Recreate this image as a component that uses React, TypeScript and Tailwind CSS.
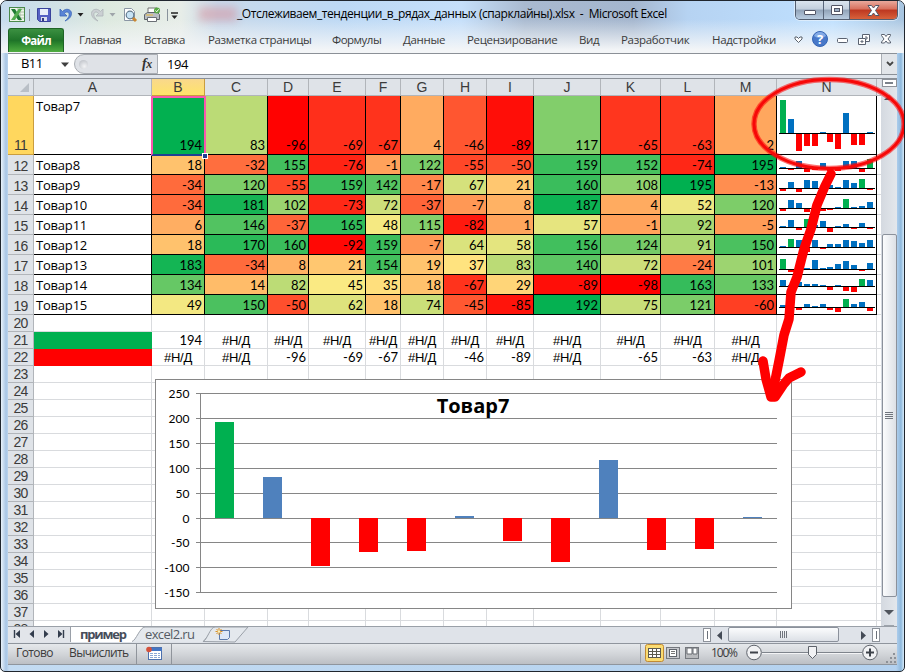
import React from 'react';

const COLS = [
  { n: 'A', w: 118 }, { n: 'B', w: 53 }, { n: 'C', w: 63 }, { n: 'D', w: 41 }, { n: 'E', w: 57 },
  { n: 'F', w: 35 }, { n: 'G', w: 43 }, { n: 'H', w: 43 }, { n: 'I', w: 47 }, { n: 'J', w: 67 },
  { n: 'K', w: 60 }, { n: 'L', w: 54 }, { n: 'M', w: 62 }, { n: 'N', w: 100 },
];

const DATA: number[][] = [
  [194, 83, -96, -69, -67, 4, -46, -89, 117, -65, -63, 2],
  [18, -32, 155, -76, -1, 122, -55, -50, 159, 152, -74, 195],
  [-34, 120, -55, 159, 142, -17, 67, 21, 160, 108, 195, -13],
  [-34, 181, 102, -73, 72, -37, -7, 8, 187, 4, 52, 120],
  [6, 146, -37, 165, 48, 115, -82, 1, 57, -1, 92, -5],
  [18, 170, 160, -92, 159, -7, 64, 58, 156, 124, 91, 150],
  [183, -34, 8, 21, 154, 19, 37, 83, 140, 72, -24, 101],
  [134, 14, 82, 45, 35, 18, -67, 29, -89, -98, 163, 133],
  [49, 150, -50, 62, 18, 74, -45, -85, 192, 75, 121, -60],
];

const NA = '#Н/Д';
const LINE21 = ['194', NA, NA, NA, NA, NA, NA, NA, NA, NA, NA, NA];
const LINE22 = [NA, NA, '-96', '-69', '-67', NA, '-46', '-89', NA, '-65', '-63', NA];

function heat(v: number) {
  const lo = [255, 0, 0], mid = [255, 235, 132], hi = [0, 176, 80];
  const a = v < 42 ? lo : mid;
  const b = v < 42 ? mid : hi;
  const t = v < 42 ? Math.max(0, (v + 97) / 139) : (v - 42) / 153;
  return `rgb(${a.map((c, i) => Math.round(c + (b[i] - c) * t)).join(',')})`;
}

function Spark({ values, tall }: { values: number[]; tall: boolean }) {
  const max = Math.max(...values);
  const min = Math.min(...values);
  const range = tall ? 50 : 12;
  const axis = Math.round(4 + (range * max) / (max - min));
  return (
    <svg width="99" height={tall ? 58 : 19} className="block" shapeRendering="crispEdges">
      {values.map((v, i) => {
        const h = Math.max(1, Math.round((Math.abs(v) * range) / (max - min)));
        return (
          <rect key={i} x={Math.round(3 + i * 7.9)} width="6" height={h}
            y={v < 0 ? axis + 1 : axis - h} fill={v === max ? '#00b050' : v < 0 ? '#ff0000' : '#0070c0'} />
        );
      })}
      <rect x="2" y={axis} width="96" height="1" fill="#000" />
    </svg>
  );
}

function RowHead({ n, active }: { n: number; active?: boolean }) {
  return (
    <div className={`flex w-[26px] shrink-0 items-end justify-center border-r border-b text-[14px] tracking-[-0.7px] ${active ? 'border-[#c99d3f] bg-[#ffd75e] leading-[18px]' : 'border-[#b1b5ba] bg-[#dfe3e8] leading-[16px]'} text-[#3b3b3b] font-['Liberation_Sans',sans-serif]`}>
      {n}
    </div>
  );
}

function Sheet() {
  const tail = Array.from({ length: 19 }, (_, i) => 20 + i);
  return (
    <div className="relative h-[547px] w-[873px] overflow-hidden bg-white">
      <div className="flex h-[17px] bg-[#dfe3e8] font-['Liberation_Sans',sans-serif] text-[14px] text-[#3b3b3b]">
        <div className="flex w-[26px] shrink-0 items-end justify-end border-r border-b border-[#b1b5ba] pr-[4px] pb-[3px]">
          <svg width="9" height="9"><path d="M9 0V9H0Z" fill="#b9bfc6" /></svg>
        </div>
        {COLS.map((c) => (
          <div key={c.n} style={{ width: c.w }}
            className={`shrink-0 border-r border-b text-center leading-[17px] ${c.n === 'B' ? 'border-[#c99d3f] bg-[linear-gradient(#f9d88c,#ffe46a)]' : 'border-[#b1b5ba]'}`}>
            {c.n}
          </div>
        ))}
        <div className="flex-1 border-b border-[#b1b5ba]" />
      </div>
      {DATA.map((row, r) => (
        <div key={r} className={`flex ${r === 0 ? 'h-[59px]' : 'h-[20px]'}`}>
          <RowHead n={11 + r} active={r === 0} />
          <div className={`w-[118px] shrink-0 border-r border-b border-black pl-[2px] font-['Open_Sans',sans-serif] text-[13px] tracking-[-0.2px] ${r === 0 ? 'leading-[21px]' : 'leading-[20px]'}`}>
            Товар{7 + r}
          </div>
          {row.map((v, i) => (
            <div key={i} style={{ width: COLS[i + 1].w, backgroundColor: heat(v) }}
              className="flex shrink-0 items-end justify-end border-r border-b border-black pr-[2px] font-['Lato',sans-serif] text-[13px] leading-[18px]">
              {v}
            </div>
          ))}
          <div className="w-[100px] shrink-0 border-r border-b border-black"><Spark values={row} tall={r === 0} /></div>
          <div className="flex-1 border-b border-[#d9dbde]" />
        </div>
      ))}
      {tail.map((n) => (
        <div key={n} className="flex h-[17px]">
          <RowHead n={n} />
          {COLS.map((c, i) => {
            const text = n === 21 ? LINE21[i - 1] : n === 22 ? LINE22[i - 1] : undefined;
            const fill = i === 0 && n === 21 ? 'bg-[#00b050] border-[#00b050]' : i === 0 && n === 22 ? 'bg-[#ff0000] border-[#ff0000]' : 'border-[#d9dbde]';
            return (
              <div key={c.n} style={{ width: c.w }}
                className={`shrink-0 border-r border-b whitespace-nowrap ${fill} ${text === NA ? "text-center font-['Liberation_Sans',sans-serif] text-[13px] leading-[17px] tracking-[-0.3px]" : "pr-[2px] text-right font-['Lato',sans-serif] text-[13px] leading-[17px]"}`}>
                {text}
              </div>
            );
          })}
          <div className="flex-1 border-b border-[#d9dbde]" />
        </div>
      ))}
      <div className="absolute top-[17px] left-[143px] h-[60px] w-[55px] border-2 border-[#f957ae] border-b-[#1f3f93]" />
      <div className="absolute top-[74px] left-[194px] h-[6px] w-[6px] border border-white bg-[#1f3f93]" />
      <Chart />
    </div>
  );
}

function Chart() {
  const ticks = [250, 200, 150, 100, 50, 0, -50, -100, -150];
  const ys = [393, 418, 443, 468, 493, 518, 542, 567, 592];
  return (
    <div className="absolute top-[300px] left-[147px] h-[230px] w-[637px] border border-[#868686] bg-white">
      <svg width="635" height="228" viewBox="156 380 635 228" shapeRendering="crispEdges" className="block">
        {ys.map((y) => <rect key={y} x="196" y={y} width="581" height="1" fill="#868686" />)}
        <rect x="200" y="393" width="1" height="200" fill="#868686" />
        {DATA[0].map((v, i) => {
          const h = Math.max(1, Math.round(Math.abs(v) * 0.496));
          return <rect key={i} x={215 + i * 48} width="19" y={v > 0 ? 518 - h : 518} height={h}
            fill={v === 194 ? '#00b050' : v < 0 ? '#ff0000' : '#4f81bd'} />;
        })}
        {ticks.map((t, i) => (
          <text key={t} x="189.500" y={ys[i] + 5} textAnchor="end" className="font-['Lato',sans-serif] text-[12px]">{t}</text>
        ))}
        <text x="473" y="413" textAnchor="middle" className="font-['Open_Sans',sans-serif] text-[20px] font-bold">Товар7</text>
      </svg>
    </div>
  );
}

function QuickIcons() {
  return (
    <svg width="185" height="28" viewBox="0 0 185 28" className="shrink-0">
      <rect x="9.5" y="7.5" width="15" height="14" fill="#eef6e9" stroke="#4b8a4b" />
      <path d="M17 9h7M17 12h7M17 15h7M17 18h7M20 8v13" stroke="#9fb59b" strokeWidth=".8" />
      <path d="M11 9h4l7 11h-4z" fill="#1f7b33" /><path d="M18.500 9h3.500l-7 11h-4z" fill="#54ad50" />
      <path d="M29.500 9v12" stroke="#89939c" />
      <path d="M37.500 8.500h13v13h-11l-2-2z" fill="#5661c4" stroke="#39439b" />
      <path d="M40 9h8v6h-8z" fill="#e9effa" /><path d="M41 17h6v4h-6z" fill="#dce0ed" /><path d="M42 18h2v3h-2z" fill="#343c83" />
      <path d="M60 9v7h7l-2.500-2.500c2-2.600 5-1.500 4.700 1.500-.2 2-1.800 4-4.200 6 4-1.500 6.500-4.500 6.500-7.500 0-4.200-5.500-6-9-2z" fill="#5a84d6" stroke="#3e68b8" strokeWidth=".8" />
      <path d="M77.500 13h6l-3 3.500z" fill="#222" />
      <path d="M103 9v7h-7l2.500-2.500c-2-2.600-5-1.500-4.700 1.500.2 2 1.800 4 4.200 6-4-1.500-6.500-4.500-6.500-7.500 0-4.200 5.500-6 9-2z" fill="#cbd0d3" stroke="#adb4b8" strokeWidth=".8" />
      <path d="M109.500 13h6l-3 3.500z" fill="#9fa5aa" />
      <path d="M124.500 8.500h7l3 3v9h-10z" fill="#fff" stroke="#8a96a4" />
      <path d="m132 17 4 4" stroke="#cb8732" strokeWidth="3" />
      <circle cx="130" cy="15" r="3.800" fill="#c7e3f5" stroke="#61798c" strokeWidth="1.200" />
      <path d="M148 8h9v6h-9z" fill="#fff" stroke="#737373" />
      <path d="M144.500 14.500l3-2h10l2 2v5h-15z" fill="#b9bdc3" stroke="#5f646b" /><path d="M147.500 17.500h9v4h-9z" fill="#fff" stroke="#6a6f75" />
      <path d="M146 15h7" stroke="#e9bc3e" /><circle cx="157" cy="10.500" r="3" fill="#58a946" /><path d="m155.500 10.500 1.200 1.300 2-2.500" stroke="#fff" fill="none" />
      <path d="M167.500 9v12" stroke="#89939c" />
      <path d="M171 13h7" stroke="#222" strokeWidth="1.300" /><path d="M171.500 15.500h6l-3 3.500z" fill="#222" />
    </svg>
  );
}

function WindowButtons() {
  return (
    <div className="absolute top-0 right-[6px] flex h-[19px] w-[103px] overflow-hidden rounded-b-[5px] border border-t-0 border-[#535e70] shadow-[0_0_0_1px_#eef5fc99]">
      <div className="flex w-[28px] items-center justify-center border-r border-[#59667a] bg-[linear-gradient(#dbe5ef,#c2cfdd_45%,#91a3b8_50%,#b9cce0)]">
        <div className="mt-[4px] h-[5px] w-[12px] rounded-[1px] border border-[#535666] bg-white" />
      </div>
      <div className="flex w-[26px] items-center justify-center border-r border-[#59667a] bg-[linear-gradient(#dbe5ef,#c2cfdd_45%,#91a3b8_50%,#b9cce0)]">
        <div className="flex h-[10px] w-[12px] items-center justify-center rounded-[1px] border border-[#535666] bg-white"><div className="h-[4px] w-[6px] border border-[#535666] bg-[#9fb1c6]" /></div>
      </div>
      <div className="flex flex-1 items-center justify-center bg-[linear-gradient(#e9a99c,#d8705d_45%,#bd3720_50%,#d8623b)]">
        <svg width="13" height="11"><path d="M1 .5h3.500l2 2.500 2-2.500H12L8.500 5.500l3.500 5H8.500l-2-2.500-2 2.500H1l3.500-5z" fill="#fff" stroke="#535666" /></svg>
      </div>
    </div>
  );
}

const TABS = [
  { t: 'Главная', c: 'ml-[15px] w-[65px] tracking-[-0.5px]' },
  { t: 'Вставка', c: 'w-[64px] tracking-[-0.4px]' },
  { t: 'Разметка страницы', c: 'w-[124px] tracking-[-0.35px]' },
  { t: 'Формулы', c: 'w-[71px] tracking-[-0.5px]' },
  { t: 'Данные', c: 'w-[64px] tracking-[-0.35px]' },
  { t: 'Рецензирование', c: 'w-[112px] tracking-[-0.35px]' },
  { t: 'Вид', c: 'w-[42px] tracking-[-0.4px]' },
  { t: 'Разработчик', c: 'w-[91px] tracking-[-0.3px]' },
  { t: 'Надстройки', c: 'w-[78px] tracking-[-0.3px]' },
];

function Ribbon() {
  return (
    <div className="flex h-[24px] pl-[8px] font-['Open_Sans',sans-serif] text-[11.5px] text-[#3c3c3c]">
      <div className="h-[24px] w-[56px] shrink-0 rounded-t-[3px] border border-b-0 border-[#1e6426] bg-[linear-gradient(#3b9041,#1f7429_50%,#2c872e_65%,#51ad42)] text-center leading-[23px] font-bold tracking-[-0.7px] text-white">Файл</div>
      {TABS.map((t) => <div key={t.t} className={`shrink-0 leading-[24px] whitespace-nowrap ${t.c}`}>{t.t}</div>)}
      <svg width="110" height="24" viewBox="790 28 110 24" className="shrink-0">
        <path d="M795 37h2l1.500 1.500L800 37h2v2l-3.500 3.500L795 39z" fill="#fff" stroke="#59606b" />
        <circle cx="820" cy="39" r="7.500" fill="#4778c9" stroke="#3464b4" />
        <path d="M814 36a6.500 6.500 0 0 1 12 0c-3 2-8 3-12 0" fill="#83aae6" />
        <text x="820" y="44" textAnchor="middle" fill="#fff" className="font-['Open_Sans',sans-serif] text-[13px] font-bold">?</text>
        <rect x="837.500" y="38.500" width="10" height="4" rx="1" fill="#fff" stroke="#5a6270" />
        <path d="M862.500 34.500h7v7h-7z" fill="#fff" stroke="#5a6270" /><path d="M858.500 38.500h7v6h-7z" fill="#fff" stroke="#5a6270" /><path d="M861 41h2v1h-2zM865 37h2v2h-1" fill="none" stroke="#5a6270" />
        <path d="M881.500 34.500h3l1.500 2 1.500-2h3v1l-2.500 3.500 2.500 3v1h-3l-1.500-2-1.500 2h-3v-1l2.500-3-2.500-3.500z" fill="#fff" stroke="#5a6270" />
      </svg>
    </div>
  );
}

function FormulaBar() {
  return (
    <div className="flex h-[22px] border-y border-[#8b9097] bg-white font-['Open_Sans',sans-serif] text-[13px] text-black">
      <div className="flex w-[66px] items-center pl-[13px]">
        <span className="w-[40px] tracking-[-0.6px]">B11</span>
        <svg width="8" height="5"><path d="M0 .5h8L4 5z" fill="#404040" /></svg>
      </div>
      <div className="flex w-[84px] items-center justify-between rounded-l-[10px] border-y border-l border-r border-[#a9adb3] bg-[#dfe2e7] pr-[5px] pl-[4px]">
        <div className="h-[9px] w-[9px] rounded-full bg-[radial-gradient(circle_at_60%_70%,#f3f4f6,#b5b9c0)]" />
        <span className="font-['Liberation_Serif',serif] text-[14px] leading-[18px] font-bold tracking-[-0.3px] text-[#333] italic">f<span className="text-[12px]">x</span></span>
      </div>
      <div className="flex-1 pl-[9px] leading-[21px] tracking-[-0.4px]">194</div>
      <div className="flex w-[16px] items-center justify-center border-l border-[#a9adb3] bg-[#e2e5e9]">
        <svg width="8" height="6"><path d="M1 1l3 3 3-3" fill="none" stroke="#444" strokeWidth="1.800" /></svg>
      </div>
    </div>
  );
}

function VScroll() {
  return (
    <div className="flex h-[547px] w-[16px] flex-col items-center bg-[linear-gradient(90deg,#d4d9e0,#e3e7ec)]">
      <div className="flex h-[8px] w-[15px] shrink-0 items-center justify-center border border-[#8d929a] bg-white"><div className="h-[2px] w-[8px] bg-[#7c828b]" /></div>
      <div className="flex h-[147px] shrink-0 items-start justify-center pt-[8px]"><svg width="10" height="5"><path d="M0 5h10L5 0z" fill="#50555d" /></svg></div>
      <div className="flex h-[363px] w-[15px] shrink-0 items-center justify-center rounded-[2px] border border-[#8b919b] bg-[linear-gradient(90deg,#fbfcfd,#dce0e6)]">
        <div className="flex w-[8px] flex-col gap-[1px]">{[0, 1, 2, 3].map((i) => <div key={i} className="h-px w-full bg-[#70757d]" />)}</div>
      </div>
      <div className="flex flex-1 items-center border-b border-[#9da3ab] pb-px"><svg width="10" height="5" className="-translate-y-[-2px]"><path d="M0 0h10L5 5z" fill="#50555d" /></svg></div>
    </div>
  );
}

function SheetTabs() {
  return (
    <div className="flex h-[17px] border-t border-[#9aa0a8] bg-[#dfe3e9] font-['Open_Sans',sans-serif]">
      <svg width="252" height="16" viewBox="8 0 252 16" className="shrink-0">
        <rect x="8" y="0" width="62" height="15" fill="#e2e5ea" /><path d="M70.500 0v15" stroke="#9aa0a8" />
        <path d="M14.500 3v8M63.500 3v8" stroke="#333d4d" strokeWidth="1.400" />
        <path d="M20 3v8l-4.500-4zM34 3v8l-4.500-4zM44 3v8l4.500-4zM58 3v8l4.500-4z" fill="#333d4d" />
        <path d="M71 0h74l-13 15H71z" fill="#fff" />
        <path d="M132 14.500c4-1 8-14.500 13-14.500h70l-12 15" fill="#e4e8ed" stroke="#9aa0a8" />
        <path d="M203 14.500c4-1 7-14.500 12-14.500h33l-13 15z" fill="#e4e8ed" stroke="#9aa0a8" />
        <text x="80" y="12" textLength="47" className="text-[13px] font-bold" fill="#474d5a">пример</text>
        <text x="145" y="12" textLength="50" className="text-[13px]" fill="#555b64">excel2.ru</text>
        <path d="M219.500 3.500h10v7l-2 2h-8z" fill="#dce7f8" stroke="#5a79ac" />
        <path d="M219 1v7M215.500 4.500h7M216.500 2l5 5M221.500 2l-5 5" stroke="#d99025" /><circle cx="219" cy="4.500" r="1.300" fill="#fff1b6" />
      </svg>
      <div className="flex-1" />
      <div className="mt-[1px] flex h-[14px] w-[8px] items-center justify-center border border-[#8d929a] bg-white"><div className="h-[8px] w-px bg-[#6c727b]" /></div>
      <div className="flex w-[17px] items-center justify-center"><svg width="5" height="9"><path d="M5 0v9L0 4.500z" fill="#444b56" /></svg></div>
      <div className="flex h-[15px] w-[111px] items-center justify-center gap-[1px] rounded-[2px] border border-[#8b919b] bg-[linear-gradient(#fbfcfd,#dce0e6)]">
        {[0, 1, 2, 3].map((i) => <div key={i} className="h-[7px] w-px bg-[#70757d]" />)}
      </div>
      <div className="flex w-[33px] items-center justify-end pr-[6px]"><svg width="5" height="9"><path d="M0 0v9l5-4.500z" fill="#444b56" /></svg></div>
      <div className="mt-[1px] flex h-[14px] w-[8px] items-center justify-center border border-[#8d929a] bg-white"><div className="h-[8px] w-px bg-[#6c727b]" /></div>
      <div className="w-[17px]" />
    </div>
  );
}

function StatusBar() {
  return (
    <div className="flex h-[22px] items-center border-y border-[#8f959d] bg-[linear-gradient(#e5e8eb,#d2d5d9_50%,#bcbfc4)] pl-[8px] font-['Open_Sans',sans-serif] text-[12px] text-[#3b3b3b]">
      <span className="-mt-[2px] w-[53px] tracking-[-0.6px]">Готово</span>
      <span className="-mt-[2px] w-[67px] tracking-[-0.6px]">Вычислить</span>
      <div className="h-[20px] w-px bg-[#8f949b]" />
      <div className="flex w-[34px] justify-center">
        <svg width="16" height="14" className="-mt-[2px]"><rect x="2.500" y="1.500" width="13" height="12" fill="#fff" stroke="#4c70ad" /><path d="M2 2h14v3H2z" fill="#4475c3" /><path d="M4 7.500h10M4 9.500h10M4 11.500h10" stroke="#8ba8d5" strokeDasharray="3 1" /><circle cx="3" cy="3.500" r="2.800" fill="#d4513c" /></svg>
      </div>
      <div className="h-[20px] w-px bg-[#8f949b]" />
      <div className="flex-1" />
      <svg width="257" height="20" viewBox="640 644 257 20" className="shrink-0">
        <path d="M640.500 643v20" stroke="#9a9fa6" />
        <rect x="645.500" y="644.500" width="18" height="17" rx="2" fill="#fbdc72" stroke="#c18b34" />
        <rect x="648.500" y="648.500" width="12" height="9" fill="#fff" stroke="#5c5a4e" /><path d="M648 651.500h13M648 654.500h13M652.500 648v10M656.500 648v10" stroke="#5c5a4e" />
        <rect x="666.500" y="647.500" width="13" height="11" fill="#c6c8cc" stroke="#75797f" /><rect x="669.500" y="649.500" width="7" height="7" fill="#fff" stroke="#60656c" /><path d="M671 651.500h4M671 653.500h4" stroke="#777" />
        <rect x="685.500" y="647.500" width="13" height="11" fill="#b8babd" stroke="#75797f" /><path d="M687 648h5v6h-5zM693 648h4v6h-4z" fill="#fff" stroke="#686c72" />
        <text x="711" y="657" textLength="27" fill="#3b3b3b" className="text-[12px]">100%</text>
        <path d="M762 652.500h100" stroke="#7e848c" /><path d="M762 653.500h100" stroke="#f3f4f6" />
        <g fill="#f1f2f4" stroke="#5e636b"><circle cx="754" cy="652.500" r="7.300" /><circle cx="870" cy="652.500" r="7.300" /><path d="M808.500 646.500h8v8l-4 4-4-4z" /></g>
        <path d="M750 652.500h8M866 652.500h8M870 648.500v8" stroke="#3e434a" strokeWidth="2" />
        <path d="M893 653h2v2h-2zM890 657h2v2h-2zM894 657h2v2h-2zM886 661h2v2h-2zM890 661h2v2h-2zM894 661h2v2h-2z" fill="#8d9197" />
      </svg>
    </div>
  );
}

function Marker() {
  return (
    <svg width="905" height="672" viewBox="0 0 905 672" className="pointer-events-none absolute top-0 left-0">
      <ellipse cx="829" cy="124" rx="75" ry="44.500" fill="none" stroke="#ff0000" strokeOpacity=".55" strokeWidth="5.500" />
      <ellipse cx="829" cy="124" rx="75" ry="44.500" fill="none" stroke="#f70808" strokeWidth="3" />
      <path d="M831 174l-6 12-8 19-6 24-7 20-7 28-6 15-2 27-5 16-5 26-6 30" fill="none" stroke="#ff0000" strokeWidth="9.500" strokeLinecap="round" strokeLinejoin="round" />
      <path d="M763 361l3 18 5 18h4l8-12 6-7 12-6" fill="none" stroke="#ff0000" strokeWidth="9.500" strokeLinecap="round" strokeLinejoin="round" />
    </svg>
  );
}

export default function App() {
  return (
    <div className="relative flex h-[672px] w-[905px] flex-col overflow-hidden rounded-t-[7px] rounded-b-[5px] border border-[#20262e] bg-[linear-gradient(90deg,#e9f2fa,#a8c5e4_5px,#c3dbf2_8px,#b3d1ef_895px,#8fb9dd_900px,#d7ebf9)]">
      <div className="-mx-px -mt-px flex h-[53px] shrink-0 flex-col border-t border-[#20262e] bg-[linear-gradient(rgba(255,255,255,0)_35%,#f3f5f7_94%),linear-gradient(90deg,#c4daed,#dde9df_12%,#e7ede8_20%,#c8d9ea_24%,#bdd9f5_38%,#c5dffa_51%,#a9bad0_58%,#a4b6ce_70%,#b6d3f2_76%,#bfe0ff_92%,#a8c5e0)]">
        <div className="-mt-px flex h-[28px] items-center">
          <QuickIcons />
          <div className="ml-[14px] h-[14px] w-[38px] shrink-0 bg-[#d9828d] opacity-45 blur-[4px]" />
          <div className="font-['Open_Sans',sans-serif] text-[12px] tracking-[-0.43px] whitespace-pre text-black">_Отслеживаем_тенденции_в_рядах_данных (спарклайны).xlsx  -  Microsoft Excel</div>
        </div>
        <Ribbon />
      </div>
      <div className="mx-[7px] flex flex-1 flex-col">
        <FormulaBar />
        <div className="h-[4px] border-b border-[#8b9097] bg-[#dfe4eb]" />
        <div className="flex"><Sheet /><VScroll /></div>
        <SheetTabs />
        <StatusBar />
      </div>
      <WindowButtons />
      <div className="absolute -top-px -left-px"><Marker /></div>
    </div>
  );
}
